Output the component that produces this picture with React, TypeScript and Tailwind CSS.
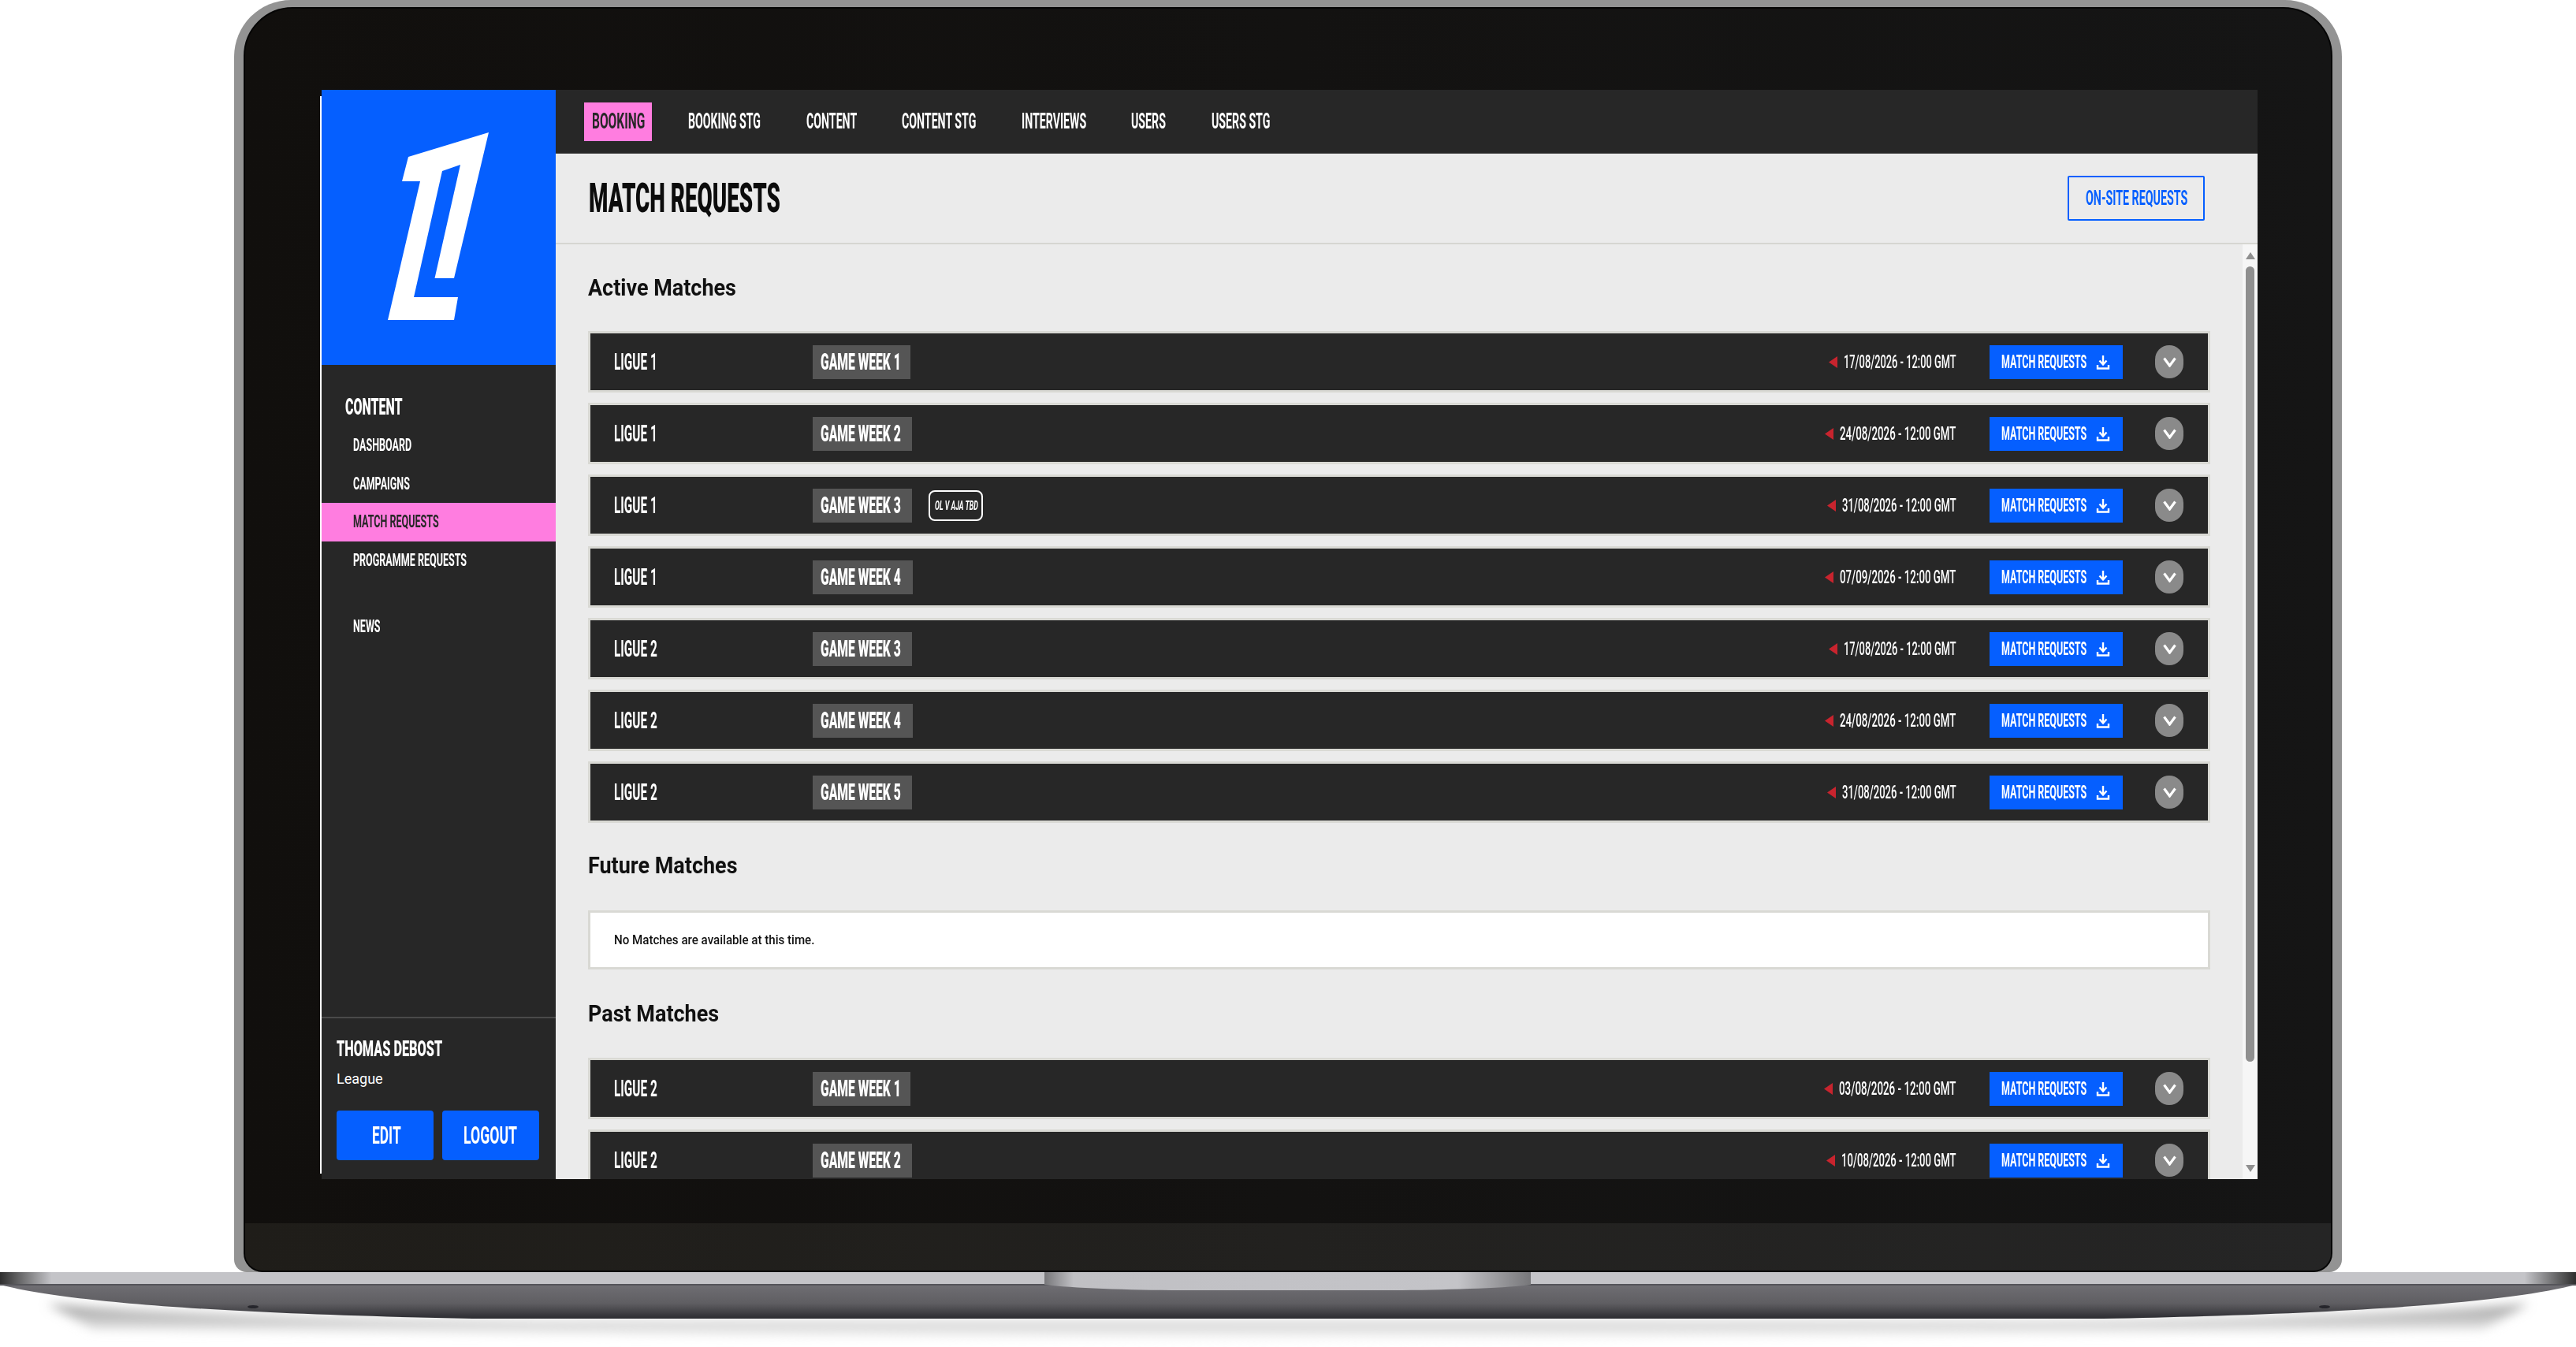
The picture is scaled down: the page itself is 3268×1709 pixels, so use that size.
import type { ReactNode } from 'react'

const rowsActive = [
  { league: 'LIGUE 1', week: 'GAME WEEK 1', badge: 'w-[124px]', date: '17/08/2026 - 12:00 GMT', dateBox: 'w-[144px]', dateFit: 'scale-x-[0.535]' },
  { league: 'LIGUE 1', week: 'GAME WEEK 2', badge: 'w-[126px]', date: '24/08/2026 - 12:00 GMT', dateBox: 'w-[149px]', dateFit: 'scale-x-[0.553]' },
  { league: 'LIGUE 1', week: 'GAME WEEK 3', badge: 'w-[126px]', date: '31/08/2026 - 12:00 GMT', dateBox: 'w-[146px]', dateFit: 'scale-x-[0.543]', tag: 'OL V AJA TBD' },
  { league: 'LIGUE 1', week: 'GAME WEEK 4', badge: 'w-[127px]', date: '07/09/2026 - 12:00 GMT', dateBox: 'w-[149px]', dateFit: 'scale-x-[0.553]' },
  { league: 'LIGUE 2', week: 'GAME WEEK 3', badge: 'w-[126px]', date: '17/08/2026 - 12:00 GMT', dateBox: 'w-[144px]', dateFit: 'scale-x-[0.535]' },
  { league: 'LIGUE 2', week: 'GAME WEEK 4', badge: 'w-[127px]', date: '24/08/2026 - 12:00 GMT', dateBox: 'w-[149px]', dateFit: 'scale-x-[0.553]' },
  { league: 'LIGUE 2', week: 'GAME WEEK 5', badge: 'w-[126px]', date: '31/08/2026 - 12:00 GMT', dateBox: 'w-[146px]', dateFit: 'scale-x-[0.543]' },
]

const rowsPast = [
  { league: 'LIGUE 2', week: 'GAME WEEK 1', badge: 'w-[124px]', date: '03/08/2026 - 12:00 GMT', dateBox: 'w-[150px]', dateFit: 'scale-x-[0.557]' },
  { league: 'LIGUE 2', week: 'GAME WEEK 2', badge: 'w-[126px]', date: '10/08/2026 - 12:00 GMT', dateBox: 'w-[147px]', dateFit: 'scale-x-[0.546]' },
]

const tabs = [
  { label: 'BOOKING STG', box: 'w-[94px]' },
  { label: 'CONTENT', box: 'w-[65px]' },
  { label: 'CONTENT STG', box: 'w-[96px]' },
  { label: 'INTERVIEWS', box: 'w-[83px]' },
  { label: 'USERS', box: 'w-[46px]' },
  { label: 'USERS STG', box: 'w-[75px]' },
]

// the reference font is an ultra condensed grotesk, so text gets squeezed inside a fixed box
function Cond({ box, className, children }: { box: string; className: string; children: ReactNode }) {
  return (
    <span className={`block shrink-0 ${box}`}>
      <span className={`inline-block origin-left whitespace-nowrap font-['Roboto',sans-serif] ${className}`}>{children}</span>
    </span>
  )
}

function DownloadIcon() {
  return (
    <svg width="18" height="19" viewBox="0 0 18 19" fill="none" stroke="#fff" strokeWidth="2.4" className="ml-[12px]">
      <path d="M9 1 V12" />
      <path d="M4.5 7.5 L9 12.5 L13.5 7.5" />
      <path d="M2 13 V17.5 H16 V13" />
    </svg>
  )
}

function Row({ row }: { row: (typeof rowsActive)[number] }) {
  return (
    <div className="h-[78px] shrink-0 border-3 border-[#d9d9d4] bg-[#272727] flex items-center pl-[30px] pr-[31px] text-white">
      <Cond box="w-[252px]" className="text-[29px] leading-[43px] font-bold scale-x-[0.53]">{row.league}</Cond>
      <div className={`h-[43px] bg-[#555555] pl-[10px] flex items-center ${row.badge}`}>
        <Cond box="w-[104px]" className="text-[29px] leading-[43px] font-black scale-x-[0.54]">{row.week}</Cond>
      </div>
      {row.tag && (
        <div className="ml-[21px] h-[39px] w-[69px] border-2 border-white rounded-lg flex items-center pl-[6px]">
          <Cond box="w-[56px]" className="text-[16px] leading-[35px] font-bold italic scale-x-[0.55]">{row.tag}</Cond>
        </div>
      )}
      <div className="ml-auto flex items-center">
        <svg width="11" height="15" viewBox="0 0 11 15" className="mr-[8px]">
          <polygon points="11,0 11,15 0,7.5" fill="#c8242e" />
        </svg>
        <Cond box={row.dateBox} className={`text-[24px] leading-[43px] font-medium ${row.dateFit}`}>{row.date}</Cond>
      </div>
      <button className="ml-[41px] h-[43px] w-[169px] bg-[#055fff] pl-[15px] flex items-center">
        <Cond box="w-[108px]" className="text-[24px] leading-[43px] font-bold scale-x-[0.52]">MATCH REQUESTS</Cond>
        <DownloadIcon />
      </button>
      <div className="ml-[41px] h-[42px] w-[36px] rounded-full bg-[#8a8a8a] flex items-center justify-center">
        <svg width="17" height="13" viewBox="0 0 17 13" fill="none" stroke="#fff" strokeWidth="3.2">
          <path d="M1.5 1.5 L8.5 11 L15.5 1.5" />
        </svg>
      </div>
    </div>
  )
}

function SectionTitle({ className, box, children }: { className: string; box: string; children: ReactNode }) {
  return (
    <h2 className={`h-[33px] ${className}`}>
      <Cond box={box} className="text-[29px] leading-[33px] font-bold text-[#111111] scale-x-[0.93]">{children}</Cond>
    </h2>
  )
}

function SideItem({ label, box, active }: { label: string; box: string; active?: boolean }) {
  return (
    <div className={`h-[48.5px] pl-[40px] flex items-center ${active ? 'bg-[#ff7de0] text-[#272727]' : 'text-white'}`}>
      <Cond box={box} className="text-[22px] leading-[48px] font-bold scale-x-[0.57]">{label}</Cond>
    </div>
  )
}

function Sidebar() {
  return (
    <aside className="w-[297px] shrink-0 bg-[#272727] flex flex-col text-white">
      <div className="h-[349px] bg-[#055fff] flex items-center justify-center">
        <svg width="297" height="349" viewBox="408 114 297 349">
          <path fill="#fff" d="M620 168 L518 199 L510 230 L533 230 L492 406 L576 406 L581 377 L525 377 L561 217 L584 209 L551.5 353 L576 353 Z" />
        </svg>
      </div>
      <div className="pl-[30px] pt-[37px] h-[33px] box-content">
        <Cond box="w-[75px]" className="text-[29px] leading-[33px] font-black scale-x-[0.55]">CONTENT</Cond>
      </div>
      <div className="mt-[8px]">
        <SideItem label="DASHBOARD" box="w-[76px]" />
        <SideItem label="CAMPAIGNS" box="w-[72px]" />
        <SideItem label="MATCH REQUESTS" box="w-[110px]" active />
        <SideItem label="PROGRAMME REQUESTS" box="w-[143px]" />
        <div className="mt-[36px]">
          <SideItem label="NEWS" box="w-[36px]" />
        </div>
      </div>
      <div className="mt-auto h-[206px] border-t-2 border-[#4a4a4a] px-[19px] pt-[22px]">
        <Cond box="w-[135px]" className="text-[28px] leading-[33px] font-black scale-x-[0.58]">THOMAS DEBOST</Cond>
        <p className="mt-[7px] font-['Roboto',sans-serif] text-[18px] leading-[30px]">League</p>
        <div className="mt-[25px] flex gap-[11px]">
          <button className="h-[63px] w-[123px] rounded-sm bg-[#055fff] flex items-center justify-center pl-[5px]">
            <Cond box="w-[38px]" className="text-[31px] leading-[63px] font-bold scale-x-[0.56]">EDIT</Cond>
          </button>
          <button className="h-[63px] w-[123px] rounded-sm bg-[#055fff] flex items-center justify-center">
            <Cond box="w-[70px]" className="text-[31px] leading-[63px] font-bold scale-x-[0.57]">LOGOUT</Cond>
          </button>
        </div>
      </div>
    </aside>
  )
}

function Main() {
  return (
    <main className="flex-1 min-w-0 flex flex-col bg-[#ebebeb]">
      <nav className="h-[81px] shrink-0 bg-[#272727] border-b border-[#444444] flex items-center pl-[36px] gap-[36px]">
        <div className="h-[49px] w-[86px] bg-[#ff7de0] flex items-center pl-[10px] text-[#272727]">
          <Cond box="w-[66px]" className="text-[27px] leading-[49px] font-bold scale-x-[0.575]">BOOKING</Cond>
        </div>
        {tabs.map((t) => (
          <div key={t.label} className="px-[10px] text-white">
            <Cond box={t.box} className="text-[27px] leading-[49px] font-bold scale-x-[0.525]">{t.label}</Cond>
          </div>
        ))}
      </nav>
      <header className="h-[115px] shrink-0 border-b-2 border-[#d6d6d1] flex items-center justify-between pl-[42px] pr-[67px]">
        <Cond box="w-[242px]" className="text-[52px] leading-[60px] font-black text-[#0c0c0c] scale-x-[0.535]">MATCH REQUESTS</Cond>
        <button className="h-[57px] w-[174px] rounded-xs border-2 border-[#055fff] pl-[21px] flex items-center">
          <Cond box="w-[130px]" className="text-[25px] leading-[53px] font-bold text-[#055fff] scale-x-[0.57]">ON-SITE REQUESTS</Cond>
        </button>
      </header>
      <div className="flex-1 min-h-0 flex">
        <div className="flex-1 min-w-0 overflow-hidden px-[41px]">
          <SectionTitle className="mt-[39px] mb-[38px]" box="w-[187px]">Active Matches</SectionTitle>
          <div className="flex flex-col gap-[13px]">
            {rowsActive.map((r) => (
              <Row key={r.league + r.week} row={r} />
            ))}
          </div>
          <SectionTitle className="mt-[38px] mb-[40px]" box="w-[190px]">Future Matches</SectionTitle>
          <div className="h-[75px] border-3 border-[#d9d9d4] bg-white flex items-center pl-[30px]">
            <Cond box="w-[253px]" className="text-[16px] leading-[24px] text-[#111111] font-medium scale-x-[0.945]">No Matches are available at this time.</Cond>
          </div>
          <SectionTitle className="mt-[40px] mb-[39px]" box="w-[165px]">Past Matches</SectionTitle>
          <div className="flex flex-col gap-[13px]">
            {rowsPast.map((r) => (
              <Row key={r.league + r.week} row={r} />
            ))}
          </div>
        </div>
        <div className="w-[19px] shrink-0 bg-[#f6f6f6] flex flex-col items-center pt-[10px]">
          <div className="h-0 w-0 border-x-[6px] border-x-transparent border-b-[9px] border-b-[#8f8f8f]" />
          <div className="mt-[9px] h-[1009px] w-[11px] rounded-full bg-[#8f8f8f]" />
          <div className="mt-[131px] h-0 w-0 border-x-[6px] border-x-transparent border-t-[9px] border-t-[#8f8f8f]" />
        </div>
      </div>
    </main>
  )
}

function LaptopBase() {
  return (
    <svg width="3268" height="95" viewBox="0 0 3268 95" className="block">
      <defs>
        <linearGradient id="body" x1="0" y1="0" x2="0" y2="1">
          <stop offset="0" stopColor="#6f6e73" />
          <stop offset="0.55" stopColor="#5f5e62" />
          <stop offset="1" stopColor="#2c2c31" />
        </linearGradient>
        <linearGradient id="strip" x1="0" y1="0" x2="1" y2="0">
          <stop offset="0" stopColor="#2e2e2e" />
          <stop offset="0.02" stopColor="#c4c4c8" />
          <stop offset="0.98" stopColor="#c4c4c8" />
          <stop offset="1" stopColor="#2e2e2e" />
        </linearGradient>
        <linearGradient id="notch" x1="0" y1="0" x2="1" y2="0">
          <stop offset="0" stopColor="#77777a" />
          <stop offset="0.06" stopColor="#c0c0c4" />
          <stop offset="0.85" stopColor="#c4c4c8" />
          <stop offset="1" stopColor="#77777a" />
        </linearGradient>
        <linearGradient id="shade" x1="0" y1="0" x2="0" y2="1">
          <stop offset="0" stopColor="#9a9a9a" />
          <stop offset="1" stopColor="#ffffff" />
        </linearGradient>
        <filter id="soft" x="-2%" y="-50%" width="104%" height="200%">
          <feGaussianBlur stdDeviation="7" />
        </filter>
      </defs>
      <path d="M60 40 C 230 56, 600 62, 700 62 L 2568 62 C 2668 62, 3038 56, 3208 40 L 3150 72 L 1634 86 L 118 72 Z" fill="url(#shade)" filter="url(#soft)" />
      <path d="M0 16 C 70 34, 230 52, 600 59 L 2668 59 C 3038 52, 3198 34, 3268 16 Z" fill="url(#body)" />
      <rect x="0" y="0" width="3268" height="16" fill="url(#strip)" />
      <rect x="0" y="15" width="3268" height="2" fill="#55555a" />
      <path d="M1325 0 L1942 0 L1942 16 C1915 20 1830 23 1760 23 L1500 23 C1430 23 1360 20 1325 16 Z" fill="url(#notch)" />
      <ellipse cx="321" cy="44" rx="7" ry="2" fill="#26262c" />
      <ellipse cx="2949" cy="44" rx="7" ry="2" fill="#26262c" />
    </svg>
  )
}

export default function App() {
  return (
    <div className="w-[3268px] h-[1709px] bg-white overflow-hidden">
      <div className="ml-[297px] w-[2674px] h-[1614px] rounded-t-[72px] rounded-b-[16px] bg-[#939393] px-[12px] pt-[9px]">
        <div className="h-[1605px] rounded-t-[62px] rounded-b-[24px] border-2 border-[#050505] bg-gradient-to-r from-[#110f0d] to-[#151515] overflow-hidden flex flex-col">
          <div className="mt-[103px] ml-[95px] flex">
            <div className="mt-[8px] h-[1367px] w-[2px] bg-white" />
            <div className="w-[2456px] h-[1382px] flex overflow-hidden">
              <Sidebar />
              <Main />
            </div>
          </div>
          <div className="mt-[56px] flex-1 bg-gradient-to-r from-[#1f1d19] to-[#252525]" />
        </div>
      </div>
      <LaptopBase />
    </div>
  )
}
